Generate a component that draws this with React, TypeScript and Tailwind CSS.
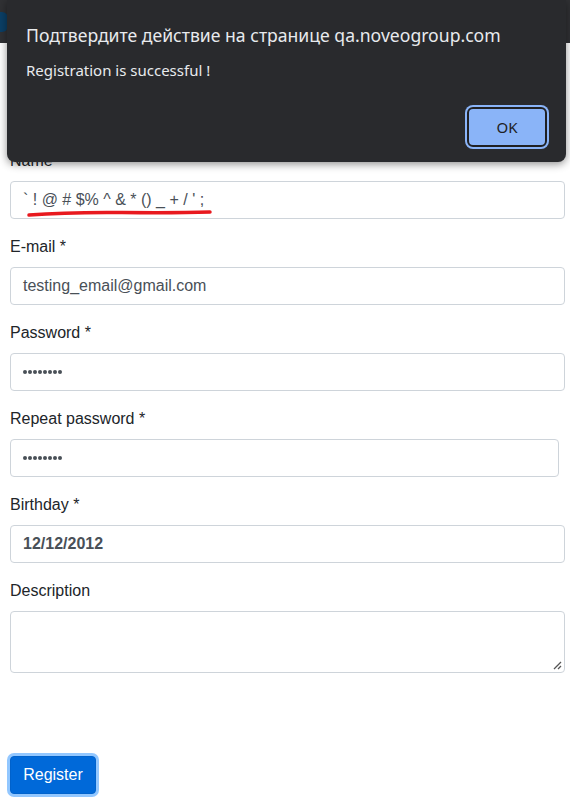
import React from "react";

const inputCls =
  "block h-[38px] rounded-[4px] border border-[#ced4da] bg-white px-[12px] text-[16px] text-[#495057] flex items-center";

function Field({
  label,
  width,
  children,
}: {
  label: string;
  width: string;
  children: React.ReactNode;
}) {
  return (
    <div className="mb-[16px]">
      <div className="h-[24px] leading-[24px] text-[16px] text-[#212529] mb-[8px]">{label}</div>
      <div className={`${inputCls} ${width}`}>{children}</div>
    </div>
  );
}

function Dots() {
  return (
    <div className="flex gap-[1.5px] items-center">
      {Array.from({ length: 8 }).map((_, i) => (
        <span key={i} className="block w-[3.5px] h-[3.5px] rounded-full bg-[#495057]" />
      ))}
    </div>
  );
}

export default function App() {
  return (
    <div
      className="relative w-[570px] h-[806px] bg-white overflow-hidden"
      style={{ fontFamily: '"Liberation Sans", Arial, sans-serif' }}
    >
      {/* top page band (dimmed navbar) */}
      <div className="h-[43px] bg-[#303134] flex items-center">
        <div className="w-[10px] h-[20px] rounded-r-[6px] bg-[#0b3f66] -ml-[2px]" />
      </div>

      {/* form */}
      <div className="pl-[10px] pt-[106px]">
        <div className="mb-[16px]">
          <div className="h-[24px] leading-[24px] text-[16px] text-[#212529] mb-[8px]">Name *</div>
          <div className={`${inputCls} w-[555px] relative`}>
            <span className="whitespace-pre">` ! @ # $% ^ &amp; * () _ + / ' ;</span>
            <svg
              className="absolute left-[16px] top-[27px]"
              width="186"
              height="10"
              viewBox="0 0 186 10"
            >
              <path
                d="M2 6 Q 40 3 95 3.5 Q 150 4 183 3"
                stroke="#e8191f"
                strokeWidth="3.5"
                fill="none"
                strokeLinecap="round"
              />
            </svg>
          </div>
        </div>
        <Field label="E-mail *" width="w-[555px]">
          testing_email@gmail.com
        </Field>
        <Field label="Password *" width="w-[555px]">
          <Dots />
        </Field>
        <Field label="Repeat password *" width="w-[549px]">
          <Dots />
        </Field>
        <Field label="Birthday *" width="w-[555px]">
          <span className="font-bold">12/12/2012</span>
        </Field>
        <div className="mb-[16px]">
          <div className="h-[24px] leading-[24px] text-[16px] text-[#212529] mb-[8px]">Description</div>
          <div className="relative w-[555px] h-[62px] rounded-[4px] border border-[#ced4da] bg-white">
            <svg className="absolute right-[2px] bottom-[2px]" width="10" height="10" viewBox="0 0 10 10">
              <path d="M9 2 L2 9 M9 6 L6 9" stroke="#555" strokeWidth="1.3" />
            </svg>
          </div>
        </div>
        <div className="pt-[67px]">
          <div className="inline-flex items-center justify-center w-[86px] h-[38px] rounded-[4px] bg-[#0069d9] text-white text-[16px] shadow-[0_0_0_3px_rgba(38,143,255,0.5)] border border-[#0062cc]">
            Register
          </div>
        </div>
      </div>

      {/* dialog overlay */}
      <div
        className="absolute left-[7px] top-0 w-[559px] h-[162px] bg-[#292a2d] rounded-b-[8px] shadow-[0_2px_8px_rgba(0,0,0,0.45)]"
        style={{ fontFamily: '"Noto Sans", "Open Sans", sans-serif' }}
      >
        <div className="pl-[19px] pt-[22px] text-[17.6px] leading-[26px] text-[#e8eaed]">
          Подтвердите действие на странице qa.noveogroup.com
        </div>
        <div className="pl-[19px] pt-[12px] text-[15px] leading-[20px] text-[#e8eaed]">
          Registration is successful !
        </div>
        <div className="flex justify-end pr-[19px] pt-[27px]">
          <div className="w-[80px] h-[40px] rounded-[6px] bg-[#8ab4f8] border-[2px] border-[#202124] shadow-[0_0_0_2px_#8ab4f8] flex items-center justify-center text-[15px] text-[#202124]">
            OK
          </div>
        </div>
      </div>
    </div>
  );
}
